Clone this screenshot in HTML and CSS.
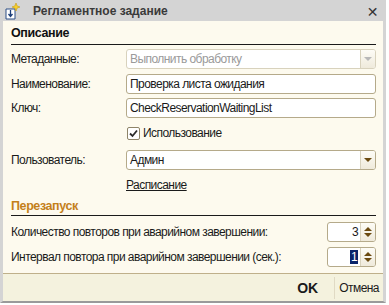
FILE: index.html
```html
<!DOCTYPE html>
<html lang="ru">
<head>
  <meta charset="UTF-8">
  <title>Регламентное задание</title>
  <link rel="stylesheet" href="styles.css">
</head>
<body>
  <div class="window">
    <div class="titlebar">
      <svg class="title-icon" width="18" height="18" viewBox="0 0 18 18">
        <path d="M3 7 H12 V17 H3 Z" fill="#fff" stroke="#2d4f86" stroke-width="1"/>
        <path d="M7.5 8 V14 M5.5 12 L7.5 14.5 L9.5 12" fill="none" stroke="#1c3e7a" stroke-width="1.3"/>
        <path d="M13 1 L14.2 4 L17 5 L14.2 6 L13 9 L11.8 6 L9 5 L11.8 4 Z" fill="#f7d02a" stroke="#c89a10" stroke-width="0.6"/>
      </svg>
      <span class="title-text">Регламентное задание</span>
      <span class="close">✕</span>
    </div>

    <div class="content">
      <div class="section-title">Описание</div>

      <div class="row">
        <label class="label">Метаданные:</label>
        <div class="field field-disabled">
          <span class="field-text">Выполнить обработку</span>
          <span class="drop-btn"><span class="arrow arrow-gray"></span></span>
        </div>
      </div>

      <div class="row">
        <label class="label">Наименование:</label>
        <div class="field"><span class="field-text">Проверка листа ожидания</span></div>
      </div>

      <div class="row">
        <label class="label">Ключ:</label>
        <div class="field"><span class="field-text">CheckReservationWaitingList</span></div>
      </div>

      <div class="row row-check">
        <span class="label"></span>
        <span class="checkbox">
          <svg width="9" height="9" viewBox="0 0 9 9"><path d="M1 4.5 L3.5 7 L8 1.5" fill="none" stroke="#2b2b2b" stroke-width="1.8"/></svg>
        </span>
        <span class="check-text">Использование</span>
      </div>

      <div class="row">
        <label class="label">Пользователь:</label>
        <div class="field">
          <span class="field-text">Админ</span>
          <span class="drop-btn"><span class="arrow"></span></span>
        </div>
      </div>

      <div class="row row-link">
        <span class="label"></span>
        <a class="link" href="#">Расписание</a>
      </div>

      <div class="section-title section-orange">Перезапуск</div>

      <div class="row">
        <label class="label label-wide">Количество повторов при аварийном завершении:</label>
        <div class="spin">
          <span class="spin-value">3</span>
          <span class="spin-btn"><span class="arrow arrow-up"></span><span class="arrow"></span></span>
        </div>
      </div>

      <div class="row">
        <label class="label label-wide">Интервал повтора при аварийном завершении (сек.):</label>
        <div class="spin">
          <span class="spin-value"><span class="selected">1</span></span>
          <span class="spin-btn"><span class="arrow arrow-up"></span><span class="arrow"></span></span>
        </div>
      </div>
    </div>

    <div class="footer">
      <span class="btn btn-ok">OK</span>
      <span class="btn-sep"></span>
      <span class="btn">Отмена</span>
    </div>
  </div>
</body>
</html>
```

FILE: styles.css
```css
body {
  margin: 0;
  padding: 0;
  background-color: #ffffff;
  font-family: "Liberation Sans", Arial, sans-serif;
  font-size: 12px;
  letter-spacing: -0.55px;
  color: #1a1a1a;
}

.window {
  width: 380px;
  height: 301px;
  border: 3px solid #d4d4d4;
  border-top: none;
  border-bottom: 2px solid #9a9a9a;
  background-color: #fdfaee;
  display: flex;
  flex-direction: column;
}

.titlebar {
  height: 21px;
  margin: 0 -3px;
  padding: 0 8px 0 3px;
  background-color: #d4d4d4;
  display: flex;
  align-items: center;
}

.title-icon {
  flex: none;
  margin-right: 12px;
}

.title-text {
  flex: 1;
  font-weight: bold;
  color: #3a3a3a;
  font-size: 12px;
  letter-spacing: 0;
}

.close {
  font-family: "DejaVu Sans", sans-serif;
  font-size: 14px;
  font-weight: bold;
  color: #333;
  margin-top: 2px;
}

.content {
  flex: 1;
  padding: 5px 7px 0 8px;
}

.section-title {
  font-weight: bold;
  font-size: 12.5px;
  letter-spacing: -0.4px;
  color: #111;
  border-bottom: 1px solid #1a1a1a;
  padding-bottom: 3px;
  margin-bottom: 4px;
  line-height: 15px;
}

.section-orange {
  color: #c4801a;
  padding-bottom: 1px;
  margin-top: 5px;
  margin-bottom: 6px;
}

.row {
  display: flex;
  align-items: center;
  height: 20px;
  margin-bottom: 4.5px;
}

.label {
  width: 115px;
  flex: none;
}

.label-wide {
  flex: 1;
  width: auto;
}

.field {
  flex: 1;
  height: 18px;
  border: 1px solid #b5aa8a;
  border-radius: 3px;
  background-color: #ffffff;
  display: flex;
  align-items: center;
  overflow: hidden;
}

.field-disabled {
  border-color: #d8d2bd;
  color: #9a9a9a;
}

.field-text {
  flex: 1;
  padding-left: 3px;
  white-space: nowrap;
}

.drop-btn {
  width: 14px;
  height: 18px;
  border-left: 1px solid #d8d2bd;
  background: linear-gradient(#fdfcf6, #efeadb);
  display: flex;
  align-items: center;
  justify-content: center;
}

.arrow {
  width: 0;
  height: 0;
  border-left: 4px solid transparent;
  border-right: 4px solid transparent;
  border-top: 4px solid #6b4a10;
}

.arrow-gray {
  border-top-color: #b8b8b8;
}

.arrow-up {
  border-top: none;
  border-bottom: 4px solid #6b4a10;
  margin-bottom: 2px;
}

.row-check {
  height: 16px;
  margin: 7px 0 9px;
}

.checkbox {
  width: 11px;
  height: 11px;
  border: 1px solid #8e8468;
  border-radius: 2px;
  background-color: #fff;
  display: flex;
  align-items: center;
  justify-content: center;
  margin-left: 1px;
  margin-right: 3px;
}

.row-link {
  height: 18px;
  margin-top: 6px;
  margin-bottom: 5px;
}

.link {
  color: #1a1a1a;
  text-decoration: underline;
}

.spin {
  width: 47px;
  height: 18px;
  border: 1px solid #b5aa8a;
  border-radius: 3px;
  background-color: #fff;
  display: flex;
  overflow: hidden;
}

.spin-value {
  flex: 1;
  text-align: right;
  padding-right: 2px;
  line-height: 18px;
}

.selected {
  background-color: #0a246a;
  color: #fff;
  padding: 0 1px;
}

.spin-btn {
  width: 14px;
  border-left: 1px solid #d8d2bd;
  background: linear-gradient(#fdfcf6, #efeadb);
  display: flex;
  flex-direction: column;
  align-items: center;
  justify-content: center;
}

.footer {
  height: 27px;
  border-top: 1px solid #bfb08a;
  background-color: #f4f2de;
  display: flex;
  align-items: center;
  justify-content: flex-end;
  padding-right: 4px;
}

.btn {
  color: #1a1a1a;
}

.btn-ok {
  font-weight: bold;
  font-size: 14px;
  letter-spacing: 0;
  margin-right: 16px;
}

.btn-sep {
  width: 1px;
  height: 22px;
  background-color: #e0dac4;
  margin-right: 4px;
}
```
